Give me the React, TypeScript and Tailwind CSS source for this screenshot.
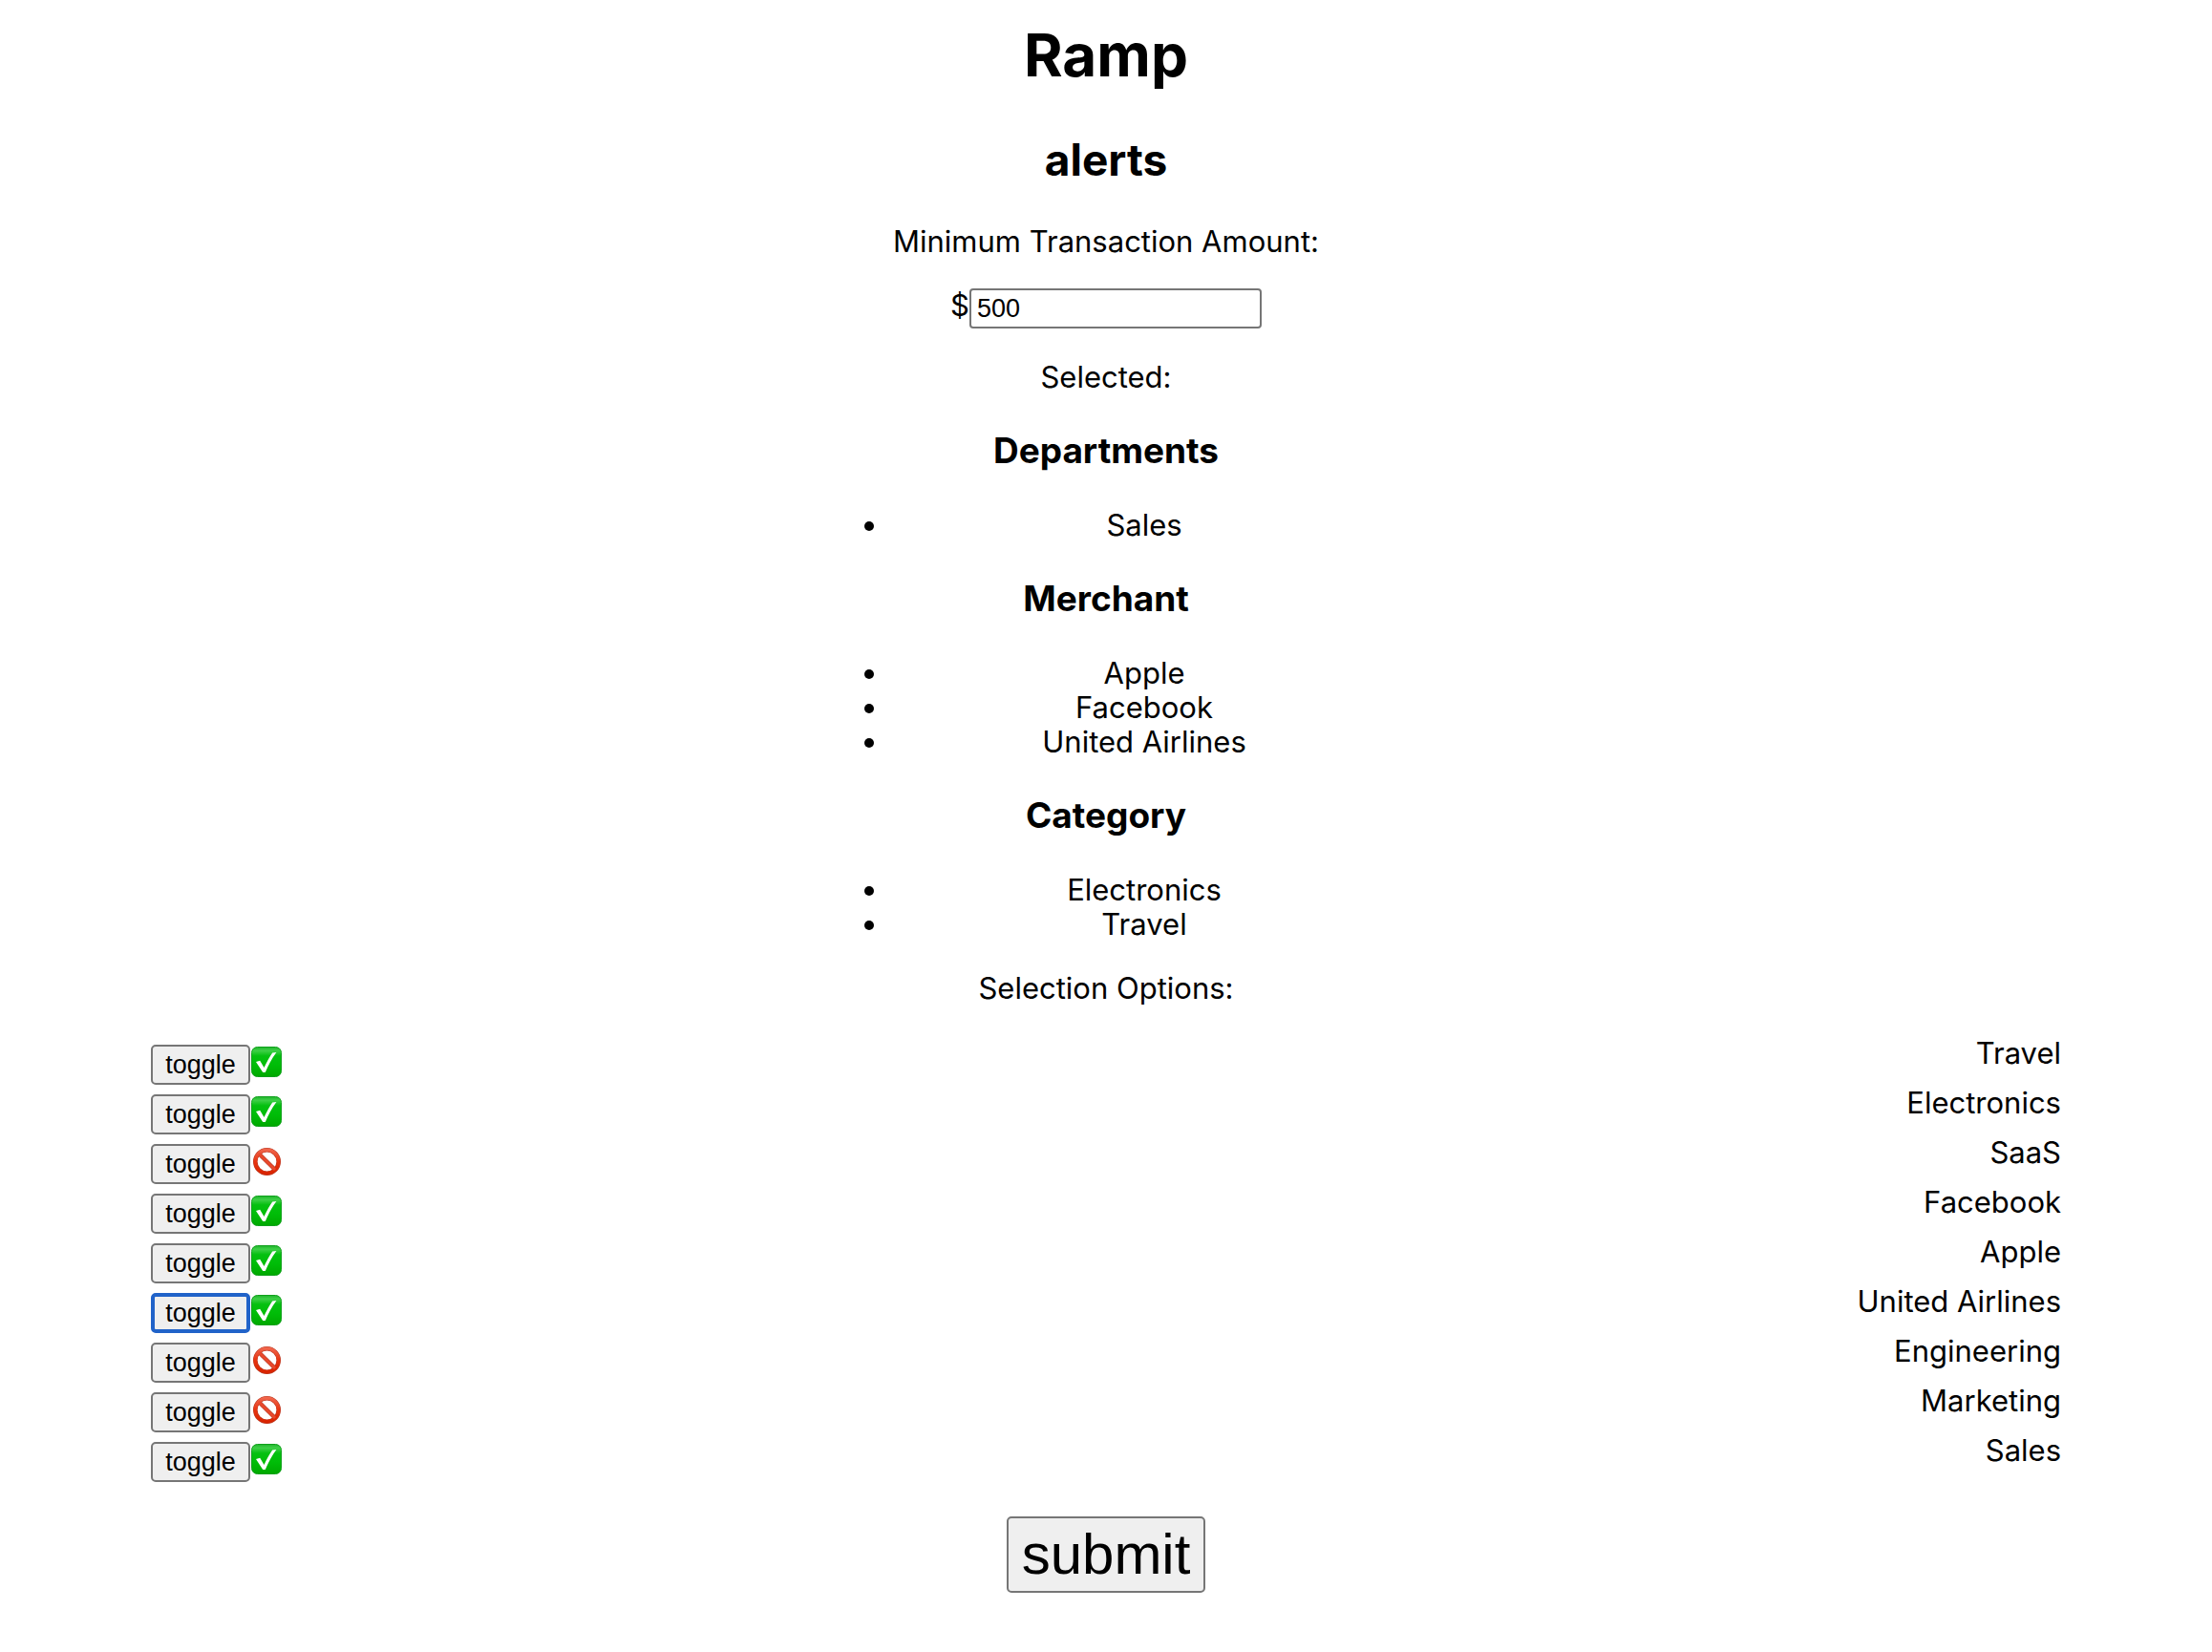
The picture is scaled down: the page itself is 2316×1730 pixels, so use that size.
import { useState } from "react";

type Option = { name: string; on: boolean };

const initialOptions: Option[] = [
  { name: "Travel", on: true },
  { name: "Electronics", on: true },
  { name: "SaaS", on: false },
  { name: "Facebook", on: true },
  { name: "Apple", on: true },
  { name: "United Airlines", on: true },
  { name: "Engineering", on: false },
  { name: "Marketing", on: false },
  { name: "Sales", on: true },
];

const groups = [
  { title: "Departments", members: ["Sales", "Engineering", "Marketing"] },
  { title: "Merchant", members: ["Apple", "Facebook", "United Airlines"] },
  { title: "Category", members: ["Electronics", "Travel", "SaaS"] },
];

function CheckIcon() {
  return (
    <svg viewBox="0 0 32 32" className="size-8" role="img" aria-label="selected">
      <defs>
        <linearGradient id="check-fill" x1="0" y1="0" x2="0" y2="1">
          <stop offset="0" stopColor="#1fb52b" />
          <stop offset="0.12" stopColor="#3fcf48" />
          <stop offset="0.3" stopColor="#05c010" />
          <stop offset="0.6" stopColor="#00bd08" />
          <stop offset="1" stopColor="#00a800" />
        </linearGradient>
      </defs>
      <rect x="0.5" y="0.5" width="31" height="31" rx="6" fill="url(#check-fill)" stroke="#10a01c" />
      <path d="M5 16 L9.2 14.8 L13.5 22 C16.2 16.2 18.8 11.2 22.2 6.4 L26.4 6 C21.2 13.2 17.8 19.8 14.8 27 L12.2 27 Z" fill="#fff" />
    </svg>
  );
}

function ProhibitedIcon() {
  return (
    <svg viewBox="0 0 32 32" className="size-8" role="img" aria-label="not selected">
      <defs>
        <linearGradient id="ring-stroke" x1="0" y1="0" x2="0" y2="1">
          <stop offset="0" stopColor="#f0644a" />
          <stop offset="0.5" stopColor="#e8330f" />
          <stop offset="1" stopColor="#d92400" />
        </linearGradient>
      </defs>
      <g fill="none">
        <circle cx="16.5" cy="16.5" r="12.2" stroke="#b93a24" strokeWidth="4.6" />
        <path d="M8.4 8.4 L24.6 24.6" stroke="#b93a24" strokeWidth="4.2" />
        <circle cx="16.5" cy="16.5" r="12.2" stroke="url(#ring-stroke)" strokeWidth="3.4" />
        <path d="M8 8 L25 25" stroke="#e9492c" strokeWidth="3" />
      </g>
    </svg>
  );
}

export default function App() {
  const [options, setOptions] = useState(initialOptions);
  const [amount, setAmount] = useState("500");

  const isOn = (name: string) => options.some((o) => o.name === name && o.on);
  const toggle = (name: string) =>
    setOptions(options.map((o) => (o.name === name ? { ...o, on: !o.on } : o)));

  return (
    <main className="flex min-h-screen flex-col items-center bg-white px-6 pt-5 pb-15 text-center font-['Inter',sans-serif] text-[31px] leading-9 text-black">
      <h1 className="text-[62px] leading-[76px] font-bold">Ramp</h1>
      <h2 className="mt-[43px] text-[46px] leading-[56px] font-bold">alerts</h2>
      <label htmlFor="amount" className="mt-10">
        Minimum Transaction Amount:
      </label>
      <div className="mt-[31px] flex items-start">
        <span>$</span>
        <input
          id="amount"
          type="text"
          value={amount}
          onChange={(e) => setAmount(e.target.value)}
          className="h-[42px] w-[306px] rounded-[4px] border-2 border-[#767676] bg-white px-1.5 font-['Liberation_Sans',sans-serif] text-[27px] leading-8 outline-none"
        />
      </div>
      <p className="mt-[33px]">Selected:</p>
      {groups.map((group) => (
        <section key={group.title} className="mt-[37px] w-full max-w-[612px]">
          <h3 className="text-[37px] leading-[44px] font-bold">{group.title}</h3>
          <ul className="mt-[38px] list-disc pl-20">
            {group.members.filter(isOn).map((name) => (
              <li key={name}>{name}</li>
            ))}
          </ul>
        </section>
      ))}
      <p className="mt-[31px]">Selection Options:</p>
      <ul className="mt-8 w-full max-w-[2000px]">
        {options.map((option, index) => (
          <li key={option.name} className="flex h-[52px] items-start justify-between">
            <div className="flex items-start gap-px pt-[9px]">
              <button
                type="button"
                autoFocus={index === 5}
                aria-label={`toggle ${option.name}`}
                onClick={() => toggle(option.name)}
                className="h-[42px] w-[104px] rounded-[5px] border-2 border-[#767676] bg-[#efefef] font-['Liberation_Sans',sans-serif] text-[27px] leading-8 outline-none focus:border-4 focus:border-[#2163c9]"
              >
                toggle
              </button>
              <span className="pt-0.5">{option.on ? <CheckIcon /> : <ProhibitedIcon />}</span>
            </div>
            <span>{option.name}</span>
          </li>
        ))}
      </ul>
      <button
        type="submit"
        className="mt-[35px] h-20 rounded-[5px] border-2 border-[#767676] bg-[#efefef] px-3.5 font-['Liberation_Sans',sans-serif] text-[60px] leading-[68px]"
      >
        submit
      </button>
    </main>
  );
}
